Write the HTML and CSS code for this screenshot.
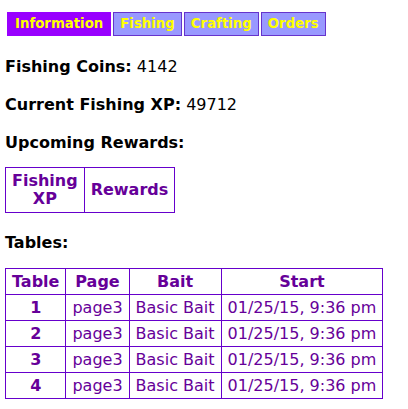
FILE: index.html
```html
<!DOCTYPE html>
<html>
<head>
<meta charset="utf-8">
<link rel="stylesheet" href="styles.css">
</head>
<body>
<nav class="tabs">
  <span class="tab active">Information</span>
  <span class="tab">Fishing</span>
  <span class="tab">Crafting</span>
  <span class="tab">Orders</span>
</nav>
<p class="stat first"><b>Fishing Coins:</b> 4142</p>
<p class="stat"><b>Current Fishing XP:</b> 49712</p>
<p class="stat label"><b>Upcoming Rewards:</b></p>
<table class="grid rewards">
  <tr><th>Fishing<br>XP</th><th>Rewards</th></tr>
</table>
<p class="stat label after-table"><b>Tables:</b></p>
<table class="grid tables">
  <tr><th>Table</th><th>Page</th><th>Bait</th><th>Start</th></tr>
  <tr><th>1</th><td>page3</td><td>Basic Bait</td><td>01/25/15, 9:36 pm</td></tr>
  <tr><th>2</th><td>page3</td><td>Basic Bait</td><td>01/25/15, 9:36 pm</td></tr>
  <tr><th>3</th><td>page3</td><td>Basic Bait</td><td>01/25/15, 9:36 pm</td></tr>
  <tr><th>4</th><td>page3</td><td>Basic Bait</td><td>01/25/15, 9:36 pm</td></tr>
</table>
</body>
</html>
```
FILE: styles.css
```css
body {
  margin: 0;
  padding: 12px 5px;
  font-family: "DejaVu Sans", Verdana, sans-serif;
  font-size: 16px;
  color: #000;
  background: #fff;
}
.tabs {
  display: flex;
  gap: 2px;
  margin-left: 2px;
}
.tab {
  font-size: 13.3px;
  font-weight: bold;
  color: #ffff00;
  background: #9999ff;
  border: 1px solid #6633cc;
  padding: 3px 6px;
  line-height: 16px;
}
.tab.active {
  background: #9900ff;
  border-color: #9900ff;
  padding: 3px 7px;
}
.stat {
  margin: 18px 0;
  line-height: 20px;
}
.stat.first {
  margin-top: 21px;
}
.stat.label {
  margin-bottom: 14px;
}
.stat.after-table {
  margin-top: 20px;
  margin-bottom: 15px;
}
.grid {
  border-collapse: collapse;
  color: #660099;
}
.grid th, .grid td {
  border: 1px solid #6600cc;
  padding: 4px 6px;
  line-height: 17px;
}
.rewards th {
  line-height: 18px;
}
.grid td {
  font-weight: normal;
}
.tables th, .tables td {
  text-align: center;
}
```
